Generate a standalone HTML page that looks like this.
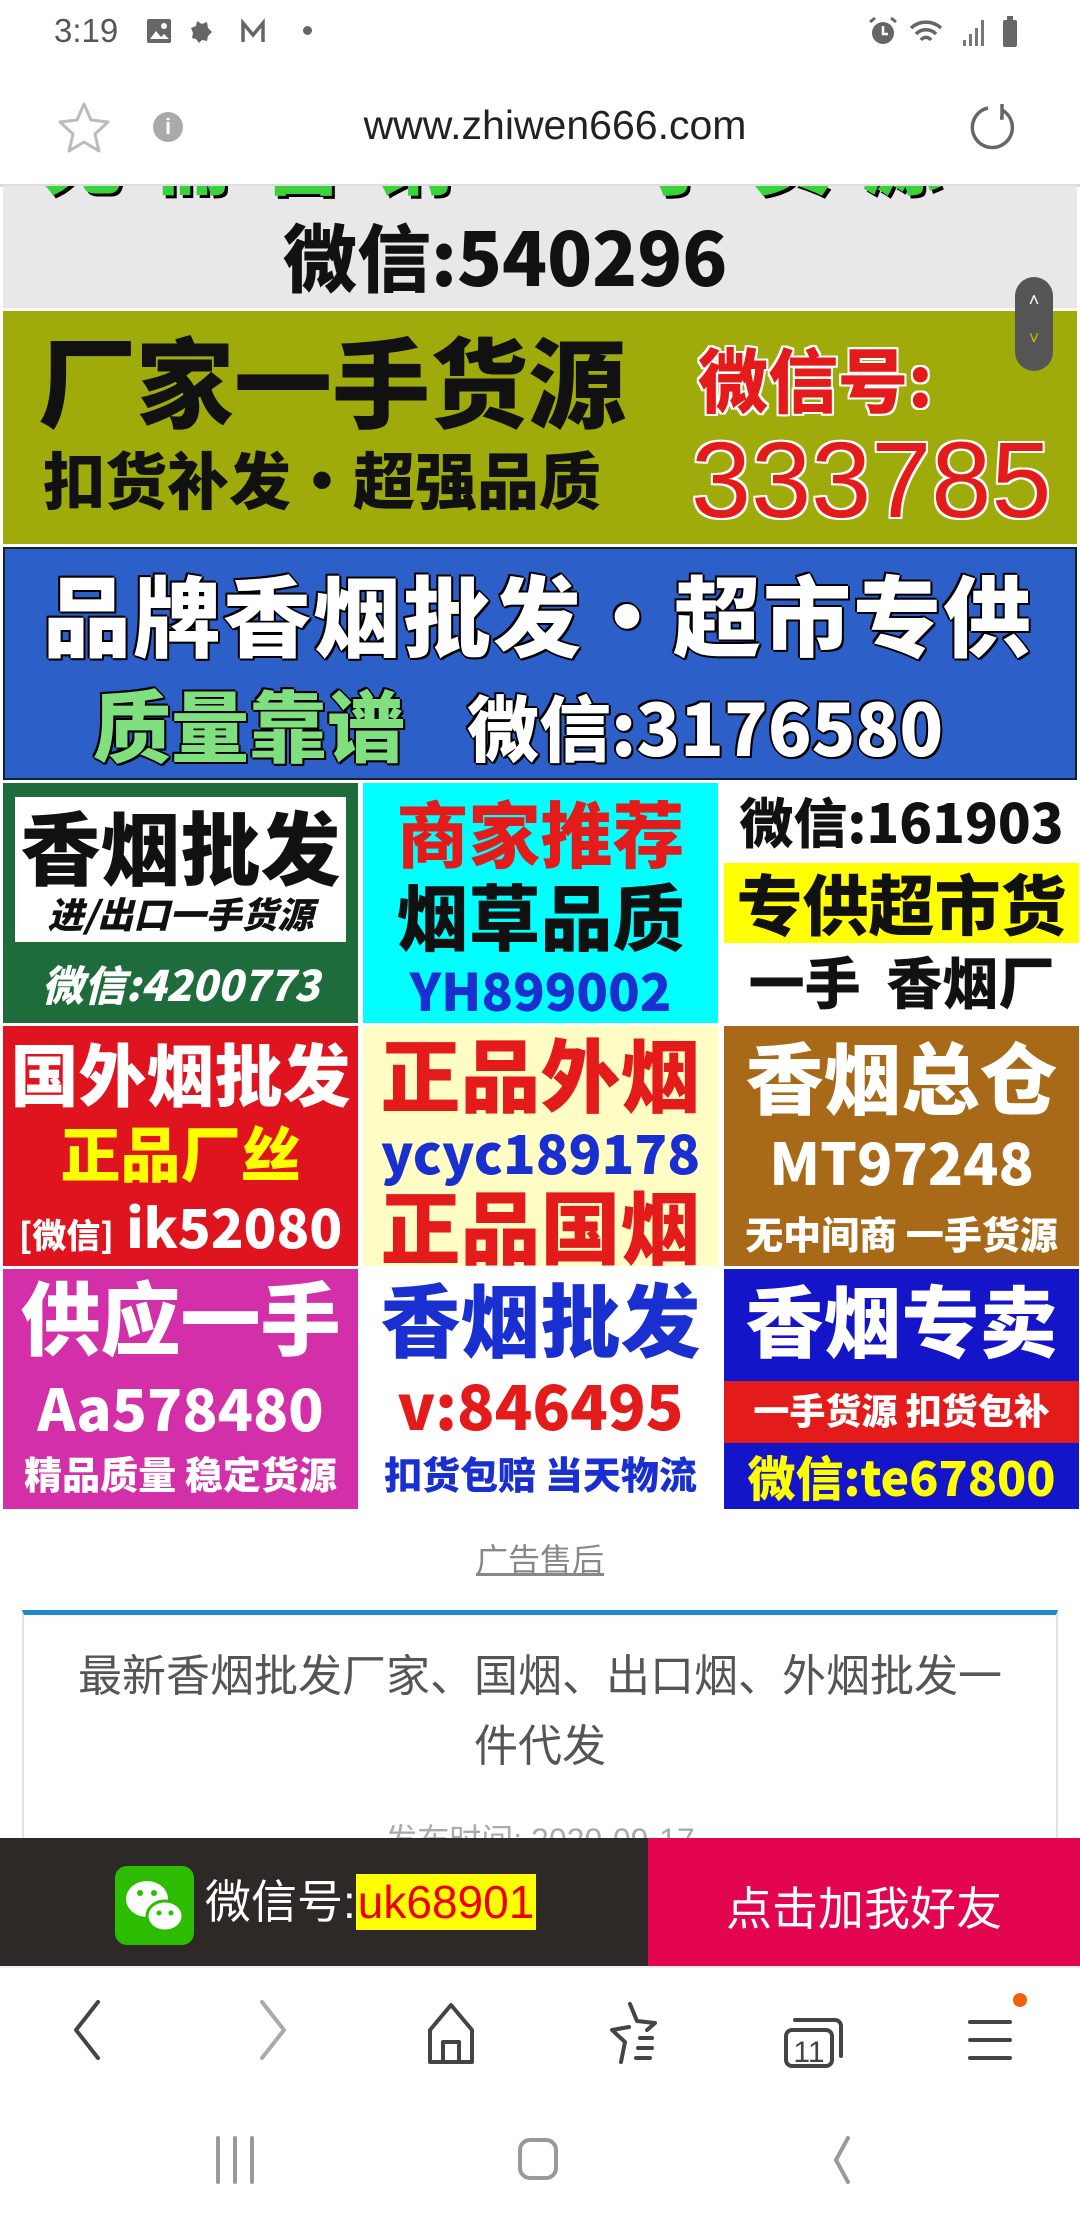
<!DOCTYPE html>
<html><head><meta charset="utf-8"><style>
*{margin:0;padding:0;box-sizing:border-box}
body{width:1080px;height:2220px;overflow:hidden;background:#fff;font-family:"Liberation Sans","Noto Sans CJK SC",sans-serif;position:relative}
.abs{position:absolute}
.b{font-family:"Noto Sans CJK SC","WenQuanYi Zen Hei",sans-serif;font-weight:900;white-space:nowrap;line-height:1}
.cell{position:absolute;width:355px;height:240px;overflow:hidden;text-align:center}
.cell div{position:absolute;left:0;right:0}
.ow{text-shadow:2px 0 #fff,-2px 0 #fff,0 2px #fff,0 -2px #fff,2px 2px #fff,-2px -2px #fff,2px -2px #fff,-2px 2px #fff}
.ob{text-shadow:2px 0 #000,-2px 0 #000,0 2px #000,0 -2px #000,2px 2px #000,-2px -2px #000}
</style></head><body>

<!-- status bar -->
<div class="abs" style="left:54px;top:12px;font-size:33px;color:#555">3:19</div>
<svg class="abs" style="left:145px;top:17px" width="140" height="30"><rect x="2" y="2" width="24" height="24" rx="2" fill="#666"/><path d="M5 22l6-8 5 6 3-3 5 5z" fill="#fff"/><circle cx="19" cy="9" r="3" fill="#fff"/><path d="M52 4l5 3 5-2 1 6 4 4-4 4-1 5-5-1-3 3-3-4-4-1 1-5-2-5 5-2z" fill="#666"/><path d="M98 25V6l10 12 10-12v19" stroke="#666" stroke-width="3.5" fill="none"/></svg>
<div class="abs" style="left:303px;top:26px;width:9px;height:9px;border-radius:50%;background:#666"></div>
<svg class="abs" style="left:865px;top:14px" width="165" height="36"><circle cx="18" cy="19" r="11" fill="#666"/><path d="M5 8l5-4M31 8l-5-4" stroke="#666" stroke-width="3"/><path d="M18 12v8h5" stroke="#fff" stroke-width="2.5" fill="none"/><path d="M46 14a22 22 0 0 1 30 0M51 20a14 14 0 0 1 20 0M56 26a6 6 0 0 1 10 0" stroke="#666" stroke-width="3.5" fill="none"/><path d="M98 32h3v-6h-3zM104 32h3v-12h-3zM110 32h3v-18h-3zM116 32h3v-26h-3z" fill="#777"/><rect x="138" y="6" width="14" height="27" rx="2" fill="#666"/><rect x="142" y="2" width="6" height="5" fill="#666"/></svg>

<!-- url bar -->
<svg class="abs" style="left:56px;top:100px" width="56" height="56"><path d="M28 4l7 16 17 2-13 12 4 17-15-9-15 9 4-17L4 22l17-2z" stroke="#bbb" stroke-width="3" fill="none" stroke-linejoin="round"/></svg>
<div class="abs" style="left:153px;top:112px;width:30px;height:30px;border-radius:50%;background:#aaa;color:#fff;font-size:22px;font-weight:bold;text-align:center;line-height:30px">i</div>
<div class="abs" style="left:0;width:1080px;top:102px;text-align:center;font-size:41px;color:#222;padding-left:30px">www.zhiwen666.com</div>
<svg class="abs" style="left:968px;top:100px" width="52" height="56"><path d="M20 8A20 20 0 1 0 34 10" stroke="#666" stroke-width="3.5" fill="none"/><path d="M34 4v14h-2" stroke="#666" stroke-width="3.5" fill="none"/></svg>
<div class="abs" style="left:0;top:184px;width:1080px;height:3px;background:#ddd"></div>

<!-- banner 1 -->
<div class="abs" style="left:3px;top:186px;width:1074px;height:122px;background:#e8e8e8;overflow:hidden">
<div class="b abs" style="left:40px;top:-72px;font-size:80px;color:#3ad23a;letter-spacing:30px;text-shadow:3px 3px #000">无需营销 一手货源</div>
<div class="b abs" style="left:280px;top:32px;font-size:74px;color:#111">微信:540296</div>
</div>
<!-- banner 2 -->
<div class="abs" style="left:3px;top:311px;width:1074px;height:233px;background:#9fab0a;overflow:hidden">
<div class="b abs" style="left:35px;top:18px;font-size:98px;color:#111">厂家一手货源</div>
<div class="b abs" style="left:40px;top:135px;font-size:62px;color:#111">扣货补发•超强品质</div>
<div class="b abs ow" style="left:695px;top:32px;font-size:70px;color:#e31b1b">微信号:</div>
<div class="abs ow" style="left:688px;top:115px;font-size:108px;color:#e31b1b;font-family:'Liberation Sans';line-height:1">333785</div>
</div>
<!-- scroll handle -->
<div class="abs" style="left:1015px;top:277px;width:38px;height:94px;border-radius:19px;background:#555"></div>
<div class="abs" style="left:1015px;top:290px;width:38px;color:#fff;font-size:18px;text-align:center">&#708;</div>
<div class="abs" style="left:1015px;top:328px;width:38px;color:#c9b600;font-size:18px;text-align:center">&#709;</div>
<!-- banner 3 -->
<div class="abs" style="left:3px;top:547px;width:1074px;height:233px;background:#2c5fc8;border:2px solid #123;overflow:hidden">
<div class="b abs ob" style="left:38px;top:20px;font-size:88px;color:#fff;letter-spacing:2px">品牌香烟批发•超市专供</div>
<div class="b abs ob" style="left:88px;top:135px;font-size:78px;color:#80e080">质量靠谱</div>
<div class="b abs ob" style="left:462px;top:140px;font-size:72px;color:#fff">微信:3176580</div>
</div>

<!-- grid row1 -->
<div class="cell" style="left:3px;top:783px;background:#1e6b3c">
<div style="left:12px;right:12px;top:14px;height:145px;background:#fff"></div>
<div class="b" style="top:22px;font-size:80px;color:#111">香烟批发</div>
<div class="b" style="top:112px;font-size:36px;color:#111;font-style:italic">进/出口一手货源</div>
<div class="b" style="top:180px;font-size:42px;color:#fff;font-style:italic">微信:4200773</div>
</div>
<div class="cell" style="left:363px;top:783px;background:#00ffff">
<div class="b" style="top:12px;font-size:72px;color:#e31b1b">商家推荐</div>
<div class="b" style="top:95px;font-size:72px;color:#111">烟草品质</div>
<div class="b" style="top:180px;font-size:52px;color:#1a2fd0">YH899002</div>
</div>
<div class="cell" style="left:724px;top:783px;background:#fff">
<div class="b" style="top:10px;font-size:54px;color:#111">微信:161903</div>
<div style="top:80px;height:80px;background:#ffff00"></div>
<div class="b" style="top:86px;font-size:66px;color:#111">专供超市货</div>
<div class="b" style="top:170px;font-size:56px;color:#111">一手&nbsp;&nbsp;香烟厂</div>
</div>
<!-- row2 -->
<div class="cell" style="left:3px;top:1026px;background:#e0141e">
<div class="b" style="top:12px;font-size:68px;color:#fff">国外烟批发</div>
<div class="b" style="top:96px;font-size:60px;color:#ffff00">正品厂丝</div>
<div class="b" style="top:172px;font-size:54px;color:#fff"><span style="font-size:34px">[微信]</span> ik52080</div>
</div>
<div class="cell" style="left:363px;top:1026px;background:#fffdc4">
<div class="b" style="top:6px;font-size:80px;color:#e31b1b">正品外烟</div>
<div class="b" style="top:98px;font-size:54px;color:#1a2fd0">ycyc189178</div>
<div class="b" style="top:158px;font-size:80px;color:#e31b1b">正品国烟</div>
</div>
<div class="cell" style="left:724px;top:1026px;background:#a86a18">
<div class="b" style="top:10px;font-size:78px;color:#fff">香烟总仓</div>
<div class="b" style="top:105px;font-size:58px;color:#fff">MT97248</div>
<div class="b" style="top:188px;font-size:38px;color:#fff">无中间商 一手货源</div>
</div>
<!-- row3 -->
<div class="cell" style="left:3px;top:1269px;background:#d22fa8">
<div class="b" style="top:6px;font-size:80px;color:#fff">供应一手</div>
<div class="b" style="top:108px;font-size:58px;color:#fff">Aa578480</div>
<div class="b" style="top:185px;font-size:38px;color:#fff">精品质量 稳定货源</div>
</div>
<div class="cell" style="left:363px;top:1269px;background:#fff">
<div class="b" style="top:8px;font-size:80px;color:#1a2fd0">香烟批发</div>
<div class="b" style="top:103px;font-size:62px;color:#e31b1b">v:846495</div>
<div class="b" style="top:185px;font-size:38px;color:#1a2fd0">扣货包赔 当天物流</div>
</div>
<div class="cell" style="left:724px;top:1269px;background:#1414c8">
<div class="b" style="top:10px;font-size:78px;color:#fff">香烟专卖</div>
<div style="top:112px;height:62px;background:#e31b1b"></div>
<div class="b" style="top:122px;font-size:36px;color:#fff">一手货源 扣货包补</div>
<div class="b" style="top:182px;font-size:48px;color:#ffff00">微信:te67800</div>
</div>

<div class="abs" style="left:0;width:1080px;top:1535px;text-align:center;font-size:32px;color:#888;text-decoration:underline">广告售后</div>

<!-- card -->
<div class="abs" style="left:22px;top:1610px;width:1036px;height:300px;border:2px solid #e2e2e2;border-top:5px solid #1e88d0"></div>
<div class="abs" style="left:60px;width:960px;top:1642px;text-align:center;font-size:44px;line-height:70px;color:#555">最新香烟批发厂家、国烟、出口烟、外烟批发一件代发</div>
<div class="abs" style="left:0;width:1080px;top:1815px;text-align:center;font-size:32px;color:#aaa">发布时间: 2020-09-17</div>

<!-- bottom bar -->
<div class="abs" style="left:0;top:1838px;width:648px;height:128px;background:#2e2826"></div>
<div class="abs" style="left:648px;top:1838px;width:432px;height:128px;background:#e3054f"></div>
<div class="abs" style="left:115px;top:1866px;width:79px;height:79px;border-radius:12px;background:#2dbd00"></div>
<svg class="abs" style="left:115px;top:1866px" width="79" height="79"><ellipse cx="32" cy="33" rx="21" ry="18" fill="#fff"/><ellipse cx="50" cy="50" rx="18" ry="15" fill="#fff" stroke="#2dbd00" stroke-width="3"/><circle cx="25" cy="27" r="3" fill="#2dbd00"/><circle cx="39" cy="27" r="3" fill="#2dbd00"/><circle cx="44" cy="47" r="2.5" fill="#2dbd00"/><circle cx="56" cy="47" r="2.5" fill="#2dbd00"/></svg>
<div class="abs" style="left:205px;top:1876px;font-size:46px;color:#fff;line-height:52px;white-space:nowrap">微信号:<span style="background:#ffff00;color:#e00;padding:2px 2px">uk68901</span></div>
<div class="abs" style="left:648px;width:432px;top:1873px;text-align:center;font-size:46px;color:#fff">点击加我好友</div>
<div class="abs" style="left:0;top:1966px;width:1080px;height:2px;background:#eee"></div>

<!-- browser nav -->
<svg class="abs" style="left:0;top:1990px" width="1080" height="90">
<g stroke="#444" stroke-width="4" fill="none" stroke-linecap="round" stroke-linejoin="round">
<path d="M98 12L76 40l22 28"/>
<path d="M262 12l22 28-22 28" stroke="#aaa"/>
<path d="M430 72V40l21-25 21 25v32zM443 72V52h16v20"/>
<path d="M630 14l7 17 18 2-8 7M621 72l4-20-13-12 17-3M640 48h12M638 58h14M636 68h14"/>
<rect x="786" y="40" width="46" height="36" rx="6"/><path d="M795 30h40a6 6 0 0 1 6 6v30"/>
<path d="M970 32h40M970 50h40M970 68h40"/>
</g>
<text x="809" y="72" font-size="30" fill="#444" text-anchor="middle" font-family="Liberation Sans">11</text>
<circle cx="1020" cy="10" r="7" fill="#f06010"/>
</svg>

<!-- system nav -->
<svg class="abs" style="left:0;top:2130px" width="1080" height="60">
<g stroke="#999" stroke-width="4" fill="none" stroke-linecap="round">
<path d="M218 8v44M235 8v44M252 8v44"/>
<rect x="520" y="10" width="36" height="38" rx="10"/>
<path d="M848 8l-12 22 12 22"/>
</g></svg>
</body></html>
